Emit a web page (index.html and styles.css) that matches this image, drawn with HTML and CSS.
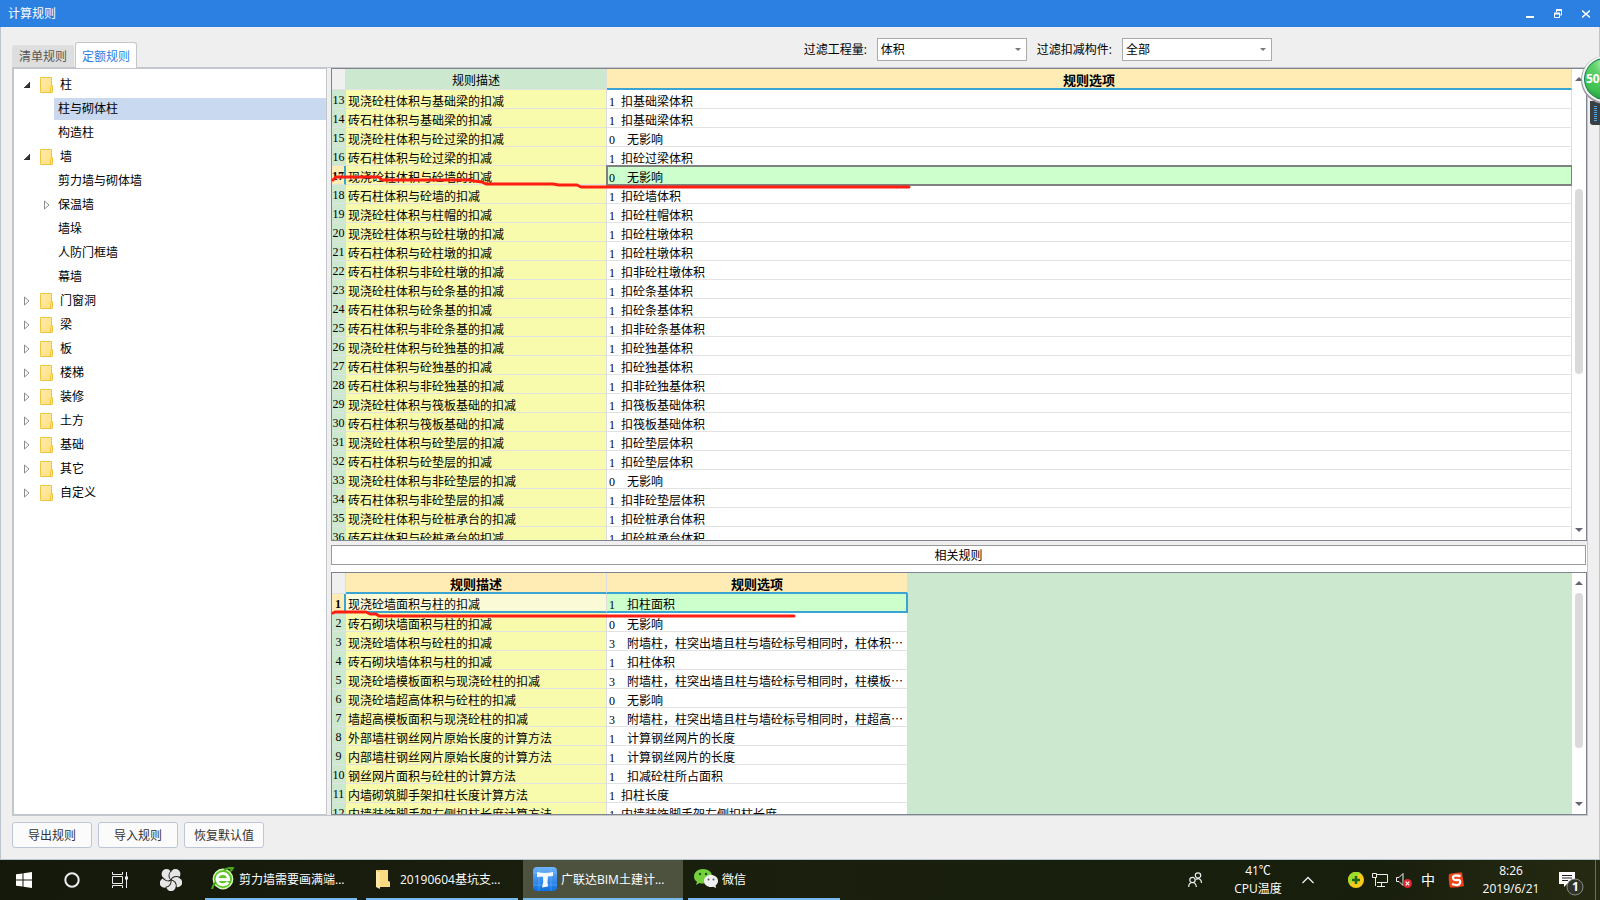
FILE: index.html
```html
<!DOCTYPE html>
<html lang="zh-CN">
<head>
<meta charset="utf-8">
<title>计算规则</title>
<link rel="stylesheet" href="styles.css">
</head>
<body>
<svg class="defs" aria-hidden="true">
  <defs>
    <linearGradient id="foldFill" x1="0" y1="0" x2="1" y2="1"><stop offset="0" stop-color="#ffebad"/><stop offset="1" stop-color="#ffe07c"/></linearGradient>
    <linearGradient id="blueFill" x1="0" y1="0" x2="0" y2="1"><stop offset="0" stop-color="#6fb3fb"/><stop offset="1" stop-color="#0e6fe0"/></linearGradient>
    <symbol id="folder" viewBox="0 0 14 16"><path d="M.5.5h11v8h1v7H.5z" fill="url(#foldFill)" stroke="#eec643"/><path d="M10.500 15.500v-5l1-2" fill="none" stroke="#eec643"/></symbol>
    <symbol id="closed" viewBox="0 0 6 10"><path d="M.5 1v8L5 5z" fill="#fff" stroke="#8c8c8c"/></symbol>
    <symbol id="open" viewBox="0 0 6 6"><path d="M6 0v6H0z" fill="#333" stroke="#222" stroke-width=".6"/></symbol>
    <symbol id="up" viewBox="0 0 8 4"><path d="M0 4l4-4 4 4z" fill="#666672"/></symbol>
    <symbol id="down" viewBox="0 0 8 4"><path d="M0 0l4 4 4-4z" fill="#666672"/></symbol>
    <symbol id="bigfolder" viewBox="0 0 16 20"><path d="M1 1h12v11l2 1v5H4z" fill="#e9bd55"/><path d="M4 1h9v11l2 1v5H4z" fill="#f9d982"/><path d="M1 1l4 3v16l-4-2z" fill="#ffe8a4"/></symbol>
  </defs>
</svg>
<header class="titlebar">
  <h1>计算规则</h1>
  <div class="winbtns">
    <button aria-label="最小化"><svg width="8" height="10"><path d="M0 8h8" stroke="#fff" stroke-width="2"/></svg></button>
    <button aria-label="还原"><svg width="8" height="10"><path d="M2.500 3V1h5v5H6" fill="none" stroke="#fff"/><path d="M2 1h6M0 4.500h6" stroke="#fff" stroke-width="2"/><path d="M.5 4v4.500h5V4" fill="none" stroke="#fff"/></svg></button>
    <button aria-label="关闭"><svg width="8" height="10"><path d="M0 1.500l8 7M8 1.500l-8 7" stroke="#fff" stroke-width="1.600"/></svg></button>
  </div>
</header>
<main class="window">
  <div class="toolbar">
    <div class="tabs"><button class="tab">清单规则</button><button class="tab on">定额规则</button></div>
    <div class="filters">
      <label for="qty">过滤工程量:</label>
      <span class="combo"><select id="qty"><option>体积</option></select></span>
      <label for="part">过滤扣减构件:</label>
      <span class="combo"><select id="part"><option>全部</option></select></span>
    </div>
  </div>
  <div class="work">
    <nav class="treebox">
      <ul class="tree">
        <li><div class="node"><svg class="tw o"><use href="#open"/></svg><svg class="fd"><use href="#folder"/></svg>柱</div>
          <ul>
            <li><div class="leaf sel">柱与砌体柱</div></li>
            <li><div class="leaf">构造柱</div></li>
          </ul></li>
        <li><div class="node"><svg class="tw o"><use href="#open"/></svg><svg class="fd"><use href="#folder"/></svg>墙</div>
          <ul>
            <li><div class="leaf">剪力墙与砌体墙</div></li>
            <li><div class="leaf parent"><svg class="tw"><use href="#closed"/></svg>保温墙</div></li>
            <li><div class="leaf">墙垛</div></li>
            <li><div class="leaf">人防门框墙</div></li>
            <li><div class="leaf">幕墙</div></li>
          </ul></li>
        <li><div class="node"><svg class="tw"><use href="#closed"/></svg><svg class="fd"><use href="#folder"/></svg>门窗洞</div></li>
        <li><div class="node"><svg class="tw"><use href="#closed"/></svg><svg class="fd"><use href="#folder"/></svg>梁</div></li>
        <li><div class="node"><svg class="tw"><use href="#closed"/></svg><svg class="fd"><use href="#folder"/></svg>板</div></li>
        <li><div class="node"><svg class="tw"><use href="#closed"/></svg><svg class="fd"><use href="#folder"/></svg>楼梯</div></li>
        <li><div class="node"><svg class="tw"><use href="#closed"/></svg><svg class="fd"><use href="#folder"/></svg>装修</div></li>
        <li><div class="node"><svg class="tw"><use href="#closed"/></svg><svg class="fd"><use href="#folder"/></svg>土方</div></li>
        <li><div class="node"><svg class="tw"><use href="#closed"/></svg><svg class="fd"><use href="#folder"/></svg>基础</div></li>
        <li><div class="node"><svg class="tw"><use href="#closed"/></svg><svg class="fd"><use href="#folder"/></svg>其它</div></li>
        <li><div class="node"><svg class="tw"><use href="#closed"/></svg><svg class="fd"><use href="#folder"/></svg>自定义</div></li>
      </ul>
    </nav>
    <section class="panes">
      <div class="grid main">
        <div class="view">
          <table class="rules">
            <colgroup><col class="c0"><col class="c1"><col></colgroup>
            <thead><tr><th class="corner"></th><th class="plain">规则描述</th><th class="hot">规则选项</th></tr></thead>
            <tbody>
              <tr><th>13</th><td>现浇砼柱体积与基础梁的扣减</td><td><i>1</i>扣基础梁体积</td></tr>
              <tr><th>14</th><td>砖石柱体积与基础梁的扣减</td><td><i>1</i>扣基础梁体积</td></tr>
              <tr><th>15</th><td>现浇砼柱体积与砼过梁的扣减</td><td><i class="w">0</i>无影响</td></tr>
              <tr><th>16</th><td>砖石柱体积与砼过梁的扣减</td><td><i>1</i>扣砼过梁体积</td></tr>
              <tr class="cur"><th>17</th><td>现浇砼柱体积与砼墙的扣减</td><td><i class="w">0</i>无影响</td></tr>
              <tr><th>18</th><td>砖石柱体积与砼墙的扣减</td><td><i>1</i>扣砼墙体积</td></tr>
              <tr><th>19</th><td>现浇砼柱体积与柱帽的扣减</td><td><i>1</i>扣砼柱帽体积</td></tr>
              <tr><th>20</th><td>现浇砼柱体积与砼柱墩的扣减</td><td><i>1</i>扣砼柱墩体积</td></tr>
              <tr><th>21</th><td>砖石柱体积与砼柱墩的扣减</td><td><i>1</i>扣砼柱墩体积</td></tr>
              <tr><th>22</th><td>砖石柱体积与非砼柱墩的扣减</td><td><i>1</i>扣非砼柱墩体积</td></tr>
              <tr><th>23</th><td>现浇砼柱体积与砼条基的扣减</td><td><i>1</i>扣砼条基体积</td></tr>
              <tr><th>24</th><td>砖石柱体积与砼条基的扣减</td><td><i>1</i>扣砼条基体积</td></tr>
              <tr><th>25</th><td>砖石柱体积与非砼条基的扣减</td><td><i>1</i>扣非砼条基体积</td></tr>
              <tr><th>26</th><td>现浇砼柱体积与砼独基的扣减</td><td><i>1</i>扣砼独基体积</td></tr>
              <tr><th>27</th><td>砖石柱体积与砼独基的扣减</td><td><i>1</i>扣砼独基体积</td></tr>
              <tr><th>28</th><td>砖石柱体积与非砼独基的扣减</td><td><i>1</i>扣非砼独基体积</td></tr>
              <tr><th>29</th><td>现浇砼柱体积与筏板基础的扣减</td><td><i>1</i>扣筏板基础体积</td></tr>
              <tr><th>30</th><td>砖石柱体积与筏板基础的扣减</td><td><i>1</i>扣筏板基础体积</td></tr>
              <tr><th>31</th><td>现浇砼柱体积与砼垫层的扣减</td><td><i>1</i>扣砼垫层体积</td></tr>
              <tr><th>32</th><td>砖石柱体积与砼垫层的扣减</td><td><i>1</i>扣砼垫层体积</td></tr>
              <tr><th>33</th><td>现浇砼柱体积与非砼垫层的扣减</td><td><i class="w">0</i>无影响</td></tr>
              <tr><th>34</th><td>砖石柱体积与非砼垫层的扣减</td><td><i>1</i>扣非砼垫层体积</td></tr>
              <tr><th>35</th><td>现浇砼柱体积与砼桩承台的扣减</td><td><i>1</i>扣砼桩承台体积</td></tr>
              <tr><th>36</th><td>砖石柱体积与砼桩承台的扣减</td><td><i>1</i>扣砼桩承台体积</td></tr>
            </tbody>
          </table>
        </div>
        <div class="scroll"><svg class="ar"><use href="#up"/></svg><div class="track"><div class="thumb mid"></div></div><svg class="ar"><use href="#down"/></svg></div>
        <svg class="mark m1" width="582" height="16"><path d="M2 5l3-3h43l3 3h87l5 1 8 1 4 2h67l6 1h18l4 2h328" fill="none" stroke="#ff1e10" stroke-width="3" stroke-linejoin="round" stroke-linecap="round"/></svg>
      </div>
      <div class="related"><div class="relhead">相关规则</div></div>
      <div class="grid sub">
        <div class="view">
          <table class="rules narrow">
            <colgroup><col class="c0"><col class="c1"><col class="c2"></colgroup>
            <thead><tr><th class="corner"></th><th class="hot">规则描述</th><th class="hot">规则选项</th></tr></thead>
            <tbody>
              <tr class="act"><th>1</th><td>现浇砼墙面积与柱的扣减</td><td><i class="w">1</i>扣柱面积</td></tr>
              <tr><th>2</th><td>砖石砌块墙面积与柱的扣减</td><td><i class="w">0</i>无影响</td></tr>
              <tr><th>3</th><td>现浇砼墙体积与砼柱的扣减</td><td><i class="w">3</i>附墙柱，柱突出墙且柱与墙砼标号相同时，柱体积…</td></tr>
              <tr><th>4</th><td>砖石砌块墙体积与柱的扣减</td><td><i class="w">1</i>扣柱体积</td></tr>
              <tr><th>5</th><td>现浇砼墙模板面积与现浇砼柱的扣减</td><td><i class="w">3</i>附墙柱，柱突出墙且柱与墙砼标号相同时，柱模板…</td></tr>
              <tr><th>6</th><td>现浇砼墙超高体积与砼柱的扣减</td><td><i class="w">0</i>无影响</td></tr>
              <tr><th>7</th><td>墙超高模板面积与现浇砼柱的扣减</td><td><i class="w">3</i>附墙柱，柱突出墙且柱与墙砼标号相同时，柱超高…</td></tr>
              <tr><th>8</th><td>外部墙柱钢丝网片原始长度的计算方法</td><td><i class="w">1</i>计算钢丝网片的长度</td></tr>
              <tr><th>9</th><td>内部墙柱钢丝网片原始长度的计算方法</td><td><i class="w">1</i>计算钢丝网片的长度</td></tr>
              <tr><th>10</th><td>钢丝网片面积与砼柱的计算方法</td><td><i class="w">1</i>扣减砼柱所占面积</td></tr>
              <tr><th>11</th><td>内墙砌筑脚手架扣柱长度计算方法</td><td><i>1</i>扣柱长度</td></tr>
              <tr><th>12</th><td>内墙装饰脚手架左侧扣柱长度计算方法</td><td><i>1</i>内墙装饰脚手架左侧扣柱长度</td></tr>
            </tbody>
          </table>
        </div>
        <div class="scroll"><svg class="ar"><use href="#up"/></svg><div class="track"><div class="thumb top"></div></div><svg class="ar"><use href="#down"/></svg></div>
        <svg class="mark m2" width="466" height="10"><path d="M2 3l2-1h31l4 2h6l3 2h415" fill="none" stroke="#ff1e10" stroke-width="3" stroke-linejoin="round" stroke-linecap="round"/></svg>
      </div>
    </section>
  </div>
  <footer class="actions"><button>导出规则</button><button>导入规则</button><button class="long">恢复默认值</button></footer>
</main>

<svg class="gauge" width="20" height="76" aria-label="50">
  <defs><radialGradient id="orb" cx=".5" cy=".1" r=".9"><stop offset="0" stop-color="#b4f2b0"/><stop offset=".35" stop-color="#5dcf6a"/><stop offset=".8" stop-color="#3fc050"/><stop offset="1" stop-color="#2aa045"/></radialGradient></defs>
  <path d="M20 46H10v21q0 3 3 3h7z" fill="#3a3f46"/><path d="M15.500 51v16" stroke="#4aa8e0" stroke-width="3" stroke-dasharray="1 1"/>
  <circle cx="25" cy="25" r="24" fill="#9a9a9a"/><circle cx="25" cy="24" r="23" fill="#f4f4f4"/><circle cx="25" cy="24" r="21" fill="#15804a"/><circle cx="25" cy="24" r="20" fill="url(#orb)"/>
  <text x="6" y="28" class="gtext">50</text>
</svg>

<footer class="taskbar">
  <button class="sys" aria-label="开始"><svg width="16" height="16"><path d="M0 2.300L6.500 1.400v6.100H0zM7.500 1.200L16 0v7.500H7.500zM0 8.500h6.500v6.100L0 13.700zM7.500 8.500H16V16l-8.500-1.200z" fill="#fff"/></svg></button>
  <button class="sys" aria-label="搜索"><svg width="16" height="16"><circle cx="8" cy="8" r="6.700" fill="none" stroke="#eee" stroke-width="2"/></svg></button>
  <button class="sys" aria-label="任务视图"><svg width="16" height="16"><path d="M.5 0v2.500h10V0M.5 16v-2.500h10V16M.5 4.500h10v7H.5zM14.500 0v16" fill="none" stroke="#eee"/><path d="M13 4.500h3v3h-3z" fill="#eee"/></svg></button>
  <button class="sys pin" aria-label="应用"><svg width="22" height="22" viewBox="-11 -11 22 22"><g fill="#e6e6e6"><circle cx="-4.500" cy="-6" r="4.900"/><circle cx="4.500" cy="-6" r="4.900"/><circle cx="6.500" cy="2.500" r="4.700"/><circle cx="0" cy="6.500" r="4.700"/><circle cx="-6.500" cy="3" r="4.700"/><circle r="5"/></g><g fill="none" stroke="#20241a" stroke-width="1"><path id="swirl" d="M0 0C-2.500-2-2.800-6 0-9"/><use href="#swirl" transform="rotate(72)"/><use href="#swirl" transform="rotate(144)"/><use href="#swirl" transform="rotate(216)"/><use href="#swirl" transform="rotate(288)"/></g></svg></button>
  <button class="app"><svg width="24" height="24"><circle cx="12" cy="12" r="10" fill="#5cc422"/><circle cx="12" cy="12" r="9.700" fill="none" stroke="#d9f7bf" stroke-width="1.400"/><path d="M6 12.500h11.500c0-3.500-2-6-5.500-6s-6 2.500-6 5.700 2.500 5.500 6 5.500c2.500 0 4-1 5-2.600" fill="none" stroke="#fff" stroke-width="3"/><path d="M1 22q1-4 4-7M13 3q6-3 9-2-1 2-3 3" fill="none" stroke="#46a91a" stroke-width="2"/></svg><span>剪力墙需要画满端...</span></button>
  <button class="app dir"><svg width="16" height="20"><use href="#bigfolder"/></svg><span>20190604基坑支...</span></button>
  <button class="app on"><svg width="24" height="24"><rect width="24" height="24" rx="4" fill="url(#blueFill)"/><path d="M0 6h24M0 18h24M6 0v24M18 0v24" stroke="#8cc4ff" stroke-width=".4"/><path d="M4 5q8 2 16 0v4l-5 .5q-1 5 0 10l-6 1q2-5 1-11l-6 .5z" fill="#f6faff"/></svg><span>广联达BIM土建计...</span></button>
  <button class="app wx"><svg width="24" height="20"><path d="M9 0c5 0 9 3 9 7s-4 7.500-9 7.500q-2 0-3.500-.6L2 16l1-3.300C1 11.500 0 9.500 0 7.500 0 3 4 0 9 0z" fill="#74d13c"/><circle cx="6" cy="5" r="1.200" fill="#205010"/><circle cx="12" cy="5" r="1.200" fill="#205010"/><path d="M17 6c4 0 7 2.500 7 6 0 2-1 3.400-2.500 4.500l.7 2.500-3-1.300q-1 .3-2.200.3c-4 0-7-2.500-7-6s3-6 7-6z" fill="#f0f1f2"/><circle cx="14.500" cy="10.500" r="1" fill="#555"/><circle cx="19.500" cy="10.500" r="1" fill="#555"/></svg><span>微信</span></button>
  <div class="tray">
    <svg class="people" width="14" height="16"><g fill="none" stroke="#eee" stroke-width="1.200"><circle cx="10" cy="3.500" r="2.700"/><circle cx="4.500" cy="8" r="2.700"/><path d="M.7 15c0-6 7.600-6 7.600 0M8 7.500c3-2 5.500 0 5.500 3.500"/></g></svg>
    <div class="two cpu"><span>41℃</span><span>CPU温度</span></div>
    <svg class="chev" width="12" height="8"><path d="M.5 7L6 1.500 11.500 7" fill="none" stroke="#eee" stroke-width="1.300"/></svg>
    <div class="icons">
      <svg width="16" height="16"><circle cx="8" cy="8" r="8" fill="#f7c91c"/><path d="M2 13A8 8 0 0 1 13 1.500Q5 4 2 13z" fill="#9bdc2c"/><path d="M8 4v8M4 8h8" stroke="#176b17" stroke-width="2.600"/></svg>
      <svg width="16" height="16"><path d="M3.500 5v9M5 2.500h10.500v8H5M5 14.500h8M9.500 11v3.500M.5 1.500h4v4h-4z" fill="none" stroke="#eee"/></svg>
      <svg width="16" height="16"><path d="M.5 5.500H3l4-4v12l-4-4H.5z" fill="none" stroke="#eee"/><circle cx="11.500" cy="11.500" r="4.500" fill="#e0262d"/><path d="M9.700 9.700l3.600 3.600M13.300 9.700l-3.600 3.600" stroke="#fff" stroke-width="1.200"/></svg>
      <span class="ime">中</span>
      <svg width="16" height="16"><path d="M1 2Q8 0 14 .5L16 14q-7 2-14 1.500Q0 8 1 2z" fill="#ef4216"/><path d="M12.500 4Q5 2.500 5 5.500t4 2.500 3 3-8 1" fill="none" stroke="#fff" stroke-width="2.300"/></svg>
    </div>
    <div class="two clock"><span>8:26</span><span>2019/6/21</span></div>
    <svg class="note" width="26" height="26"><path d="M1 2h16v12H9l-3 3v-3H1z" fill="#fff"/><path d="M4 5.500h10M4 8h10M4 10.500h6" stroke="#222"/><circle cx="17" cy="17" r="8" fill="#30332a" stroke="#888a80"/><text x="14" y="21" class="ntext">1</text></svg>
    <span class="peek"></span>
  </div>
</footer>
</body>
</html>
```
FILE: styles.css
```css
* { box-sizing: border-box; }
html, body { height: 100%; }
body {
  margin: 0;
  display: flex;
  flex-direction: column;
  overflow: hidden;
  font: 12px/16px "Open Sans", "Noto Sans CJK SC", sans-serif;
  color: #000;
  background: #efefef;
}
button, select { font: inherit; color: inherit; border: 0; margin: 0; padding: 0; background: none; }
svg { display: block; flex: none; }
.defs { position: absolute; width: 0; height: 0; }

.titlebar {
  flex: none;
  height: 27px;
  padding: 0 10px 0 8px;
  display: flex;
  align-items: center;
  justify-content: space-between;
  background: #2c80e2;
  color: #fff;
}
.titlebar h1 { margin: 0; font-size: 12px; font-weight: normal; }
.winbtns { display: flex; gap: 20px; }

.window {
  flex: 1;
  min-height: 0;
  display: flex;
  flex-direction: column;
  border: 1px solid #bcc4d0;
  border-top: 0;
  padding: 0 11px;
}
.toolbar {
  flex: none;
  height: 40px;
  display: flex;
  justify-content: space-between;
  align-items: flex-end;
}
.tabs { display: flex; align-items: flex-end; gap: 1px; }
.tab { width: 62px; height: 22px; padding-top: 2px; background: #dedede; color: #555; border-radius: 3px 3px 0 0; }
.tab.on {
  height: 26px;
  margin-bottom: -1px;
  background: #fff;
  color: #2c80e2;
  border: 1px solid #c3c7cc;
  border-bottom: 0;
  position: relative;
}
.filters { display: flex; align-items: center; padding: 0 316px 6px 0; }
.filters label { margin-right: 10px; }
.combo { position: relative; width: 150px; height: 23px; }
.combo + label { margin-left: 10px; }
.combo::after {
  content: "";
  position: absolute;
  right: 6px;
  top: 10px;
  border: 3px solid transparent;
  border-top: 3px solid #777;
  border-bottom: 0;
}
.combo select {
  width: 100%;
  height: 23px;
  padding-left: 3px;
  background: #fff;
  border: 1px solid #ababab;
  appearance: none;
}

.work { flex: 1; min-height: 0; display: flex; border-top: 1px solid #c3c7cc; border-bottom: 1px solid #c3c7cc; border-right: 1px solid #c3c7cc; }
.treebox {
  flex: none;
  width: 315px;
  margin-right: 4px;
  background: #fff;
  border: 1px solid #c3c7cc;
  border-width: 1px 1px 1px 2px;
  padding-top: 4px;
}
.tree, .tree ul { list-style: none; margin: 0; padding: 0; }
.node { height: 24px; padding-left: 10px; display: flex; align-items: center; }
.tw { width: 6px; height: 10px; margin-right: 10px; }
.tw.o { height: 6px; }
.fd { width: 14px; height: 16px; margin-right: 6px; }
.tree ul li { padding: 1px 0 1px 40px; }
.leaf { height: 22px; padding-left: 4px; display: flex; align-items: center; }
.leaf.sel { background: #c9d9ef; }
.leaf.parent { margin-left: -10px; padding-left: 0; }
.leaf.parent .tw { margin-right: 8px; }

.panes { flex: 1; min-width: 0; display: flex; flex-direction: column; background: #fff; }
.grid { position: relative; min-height: 0; display: flex; border: 1px solid #80848f; }
.main { flex: 471 1 0; }
.sub { flex: 241 1 0; }
.view { flex: 1; min-width: 0; overflow: hidden; background: #fff; }
.sub .view { background: #cce8cf; }
.related { flex: none; padding: 4px 1px 7px 0; background: linear-gradient(#efefef 4px, #fff 4px); }
.relhead { height: 20px; padding-top: 2px; border: 1px solid #999; display: flex; align-items: center; justify-content: center; background: #fff; }

.rules { width: 100%; table-layout: fixed; border-collapse: separate; border-spacing: 0; font-family: "Noto Sans CJK SC", sans-serif; }
.rules.narrow { width: 576px; }
.c0 { width: 14px; }
.c1 { width: 261px; }
.c2 { width: 301px; }
.rules th, .rules td {
  height: 19px;
  padding: 2px 0 0;
  line-height: 15px;
  white-space: nowrap;
  overflow: hidden;
  border-right: 1px solid #dcdcdc;
  border-bottom: 1px solid #e2e2e2;
}
.rules th { font-weight: normal; background: #cce8cf; }
.rules thead th { height: 21px; padding-top: 1px; }
.rules thead th.corner { background: #f0f0f0; }
.rules thead th.hot { background: #ffebb4; font-size: 13px; font-weight: bold; border-bottom: 2px solid #3aa5d3; }
.rules tbody th, .rules i { font-family: "Liberation Serif", serif; font-size: 12px; }
.rules td { background: #fff; padding-left: 2px; }
.rules td:nth-child(2) { background: #f8fbac; }
.rules i { display: inline-block; width: 12px; line-height: 0; font-style: normal; }
.rules i.w { width: 18px; }
.rules .cur th, .rules .act th { background: #ffebb4; font-weight: bold; border-right: 2px solid #3aa5d3; }
.rules .cur td:last-child { background: #ccffcc; outline: 2px solid #808080; outline-offset: -1px; }
.rules .act td { background: #fafad7; border-bottom: 2px solid #3aa5d3; line-height: 15px; }
.rules .act td:last-child { background: #ccffcc; border-right: 2px solid #3aa5d3; }

.scroll { flex: none; width: 14px; padding: 8px 0; background: #fff; display: flex; flex-direction: column; align-items: center; }
.ar { width: 8px; height: 4px; }
.track { flex: 1; width: 8px; margin: 8px 0; }
.thumb { width: 8px; border-radius: 4px; background: #dadada; }
.thumb.mid { height: 43%; margin-top: 100px; }
.thumb.top { height: 77%; }
.mark { position: absolute; left: -1px; }
.m1 { top: 106px; }
.m2 { top: 37px; }

.actions { flex: none; height: 43px; padding-top: 6px; display: flex; gap: 6px; }
.actions button { width: 80px; height: 26px; padding-top: 1px; border: 1px solid #bcc6d8; border-radius: 3px; background: #fbfbfb; color: #333; }

.gauge { position: absolute; right: 0; top: 55px; }
.gtext { font: bold 12px "Open Sans", sans-serif; fill: #fff; }

.taskbar {
  flex: none;
  height: 40px;
  display: flex;
  align-items: stretch;
  color: #fff;
  background: linear-gradient(90deg, #15190c, #1a200d 50%, #171e0c 85%, #262a12);
}
.sys { width: 48px; display: flex; align-items: center; justify-content: center; }
.sys.pin { width: 54px; margin-right: 7px; }
.app {
  width: 152px;
  margin-right: 9px;
  padding-left: 6px;
  display: flex;
  align-items: center;
  gap: 4px;
  white-space: nowrap;
  border-bottom: 2px solid #76b9ed;
}
.app span { padding-top: 2px; }
.app.dir { padding-left: 9px; gap: 9px; margin-right: 5px; }
.app.on { width: 160px; padding-left: 10px; margin-right: 5px; background: #4d523f; }
.tray { margin-left: auto; display: flex; align-items: center; }
.two { display: flex; flex-direction: column; align-items: center; line-height: 18px; }
.people { margin-right: 20px; }
.cpu { width: 72px; margin-right: 8px; }
.chev { margin-right: 34px; }
.icons { display: flex; align-items: center; gap: 8px; }
.ime { width: 16px; font-size: 14px; text-align: center; }
.ime + svg { margin-left: 4px; }
.clock { width: 70px; margin: 0 12px; }
.note { margin: 6px 11px 0 0; }
.ntext { font: bold 12px "Open Sans", sans-serif; fill: #fff; }
.peek { width: 1px; height: 40px; margin-right: 4px; background: #6b6e5c; }
```
